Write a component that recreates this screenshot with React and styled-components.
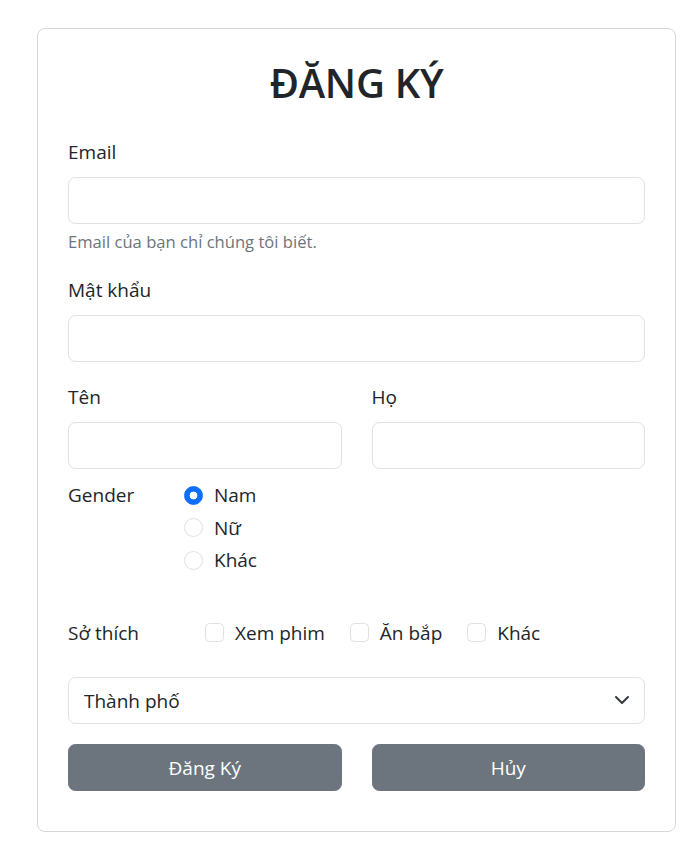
import styled, { createGlobalStyle } from 'styled-components';

//region [[ Styles ]]
const GlobalStyle = createGlobalStyle`
    * { box-sizing: border-box; }
    body {
        margin: 0;
        background: #ffffff;
        color: #212529;
        font-family: "Segoe UI", "Open Sans", "Noto Sans", sans-serif;
        font-size: 19px;
        line-height: 30px;
    }
`;

const Card = styled.form`
    margin: 28px 0 0 37px;
    width: 639px;
    padding: 30px 30px 40px;
    border: 1px solid #d6d6d6;
    border-radius: 8px;
`;

const Title = styled.h2`
    margin: 0 0 30px;
    font-size: 40px;
    line-height: 48px;
    font-weight: 600;
    text-align: center;
    letter-spacing: -0.3px;
`;

const Group = styled.div`
    margin-bottom: ${(p) => p.$mb ?? 20}px;
`;

const Label = styled.label`
    display: block;
    margin-bottom: 10px;
`;

const Input = styled.input`
    display: block;
    width: 100%;
    height: 47px;
    padding: 0 15px;
    font: inherit;
    color: #212529;
    border: 1px solid #dee2e6;
    border-radius: 7.5px;
    outline: none;
    background: #fff;
`;

const Help = styled.div`
    margin-top: 5px;
    font-size: 16.6px;
    line-height: 26px;
    color: #6c757d;
`;

const TwoCols = styled.div`
    display: grid;
    grid-template-columns: 1fr 1fr;
    gap: 30px;
    margin-bottom: ${(p) => p.$mb ?? 0}px;
`;

const OptionRow = styled.div`
    display: grid;
    grid-template-columns: ${(p) => p.$labelWidth}px 1fr;
    margin-bottom: ${(p) => p.$mb ?? 0}px;
`;

const OptionStack = styled.div`
    display: flex;
    flex-direction: ${(p) => (p.$inline ? 'row' : 'column')};
`;

const Check = styled.label`
    display: flex;
    align-items: center;
    gap: 11px;
    min-height: 30px;
    margin-bottom: 2.5px;
    margin-right: ${(p) => (p.$inline ? 25 : 0)}px;
`;

const Radio = styled.input.attrs({ type: 'radio' })`
    appearance: none;
    margin: 0;
    width: 19px;
    height: 19px;
    flex: none;
    border: 1px solid #dee2e6;
    border-radius: 50%;
    background: #fff;

    &:checked {
        border-color: #0d6efd;
        background: radial-gradient(circle, #fff 0 3.6px, #0d6efd 4.2px);
    }
`;

const Box = styled.input.attrs({ type: 'checkbox' })`
    appearance: none;
    margin: 0;
    width: 19px;
    height: 19px;
    flex: none;
    border: 1px solid #dee2e6;
    border-radius: 4.5px;
    background: #fff;
`;

const SelectWrap = styled.div`
    position: relative;
    margin-bottom: 20px;
`;

const Select = styled.select`
    display: block;
    width: 100%;
    height: 47px;
    padding: 0 45px 0 15px;
    font: inherit;
    color: #212529;
    border: 1px solid #dee2e6;
    border-radius: 7.5px;
    background: #fff;
    appearance: none;
    outline: none;
`;

const Chevron = styled.svg`
    position: absolute;
    right: 15px;
    top: 17px;
    pointer-events: none;
`;

const Button = styled.button`
    height: 47px;
    font: inherit;
    color: #ffffff;
    background: #6c757d;
    border: 1px solid #6c757d;
    border-radius: 7.5px;
`;
//endregion [[ Styles ]]

const genders = ['Nam', 'Nữ', 'Khác'];
const hobbies = ['Xem phim', 'Ăn bắp', 'Khác'];

function App() {
    return (
        <>
            <GlobalStyle />
            <Card onSubmit={(e) => e.preventDefault()}>
                <Title>ĐĂNG KÝ</Title>

                <Group>
                    <Label>Email</Label>
                    <Input type="email" />
                    <Help>Email của bạn chỉ chúng tôi biết.</Help>
                </Group>

                <Group>
                    <Label>Mật khẩu</Label>
                    <Input type="password" />
                </Group>

                <TwoCols $mb={11}>
                    <div>
                        <Label>Tên</Label>
                        <Input type="text" />
                    </div>
                    <div>
                        <Label>Họ</Label>
                        <Input type="text" />
                    </div>
                </TwoCols>

                <OptionRow $labelWidth={116} $mb={40}>
                    <span>Gender</span>
                    <OptionStack>
                        {genders.map((g, i) => (
                            <Check key={g}>
                                <Radio name="gender" defaultChecked={i === 0} />
                                {g}
                            </Check>
                        ))}
                    </OptionStack>
                </OptionRow>

                <OptionRow $labelWidth={137} $mb={27}>
                    <span>Sở thích</span>
                    <OptionStack $inline>
                        {hobbies.map((h) => (
                            <Check key={h} $inline>
                                <Box />
                                {h}
                            </Check>
                        ))}
                    </OptionStack>
                </OptionRow>

                <SelectWrap>
                    <Select defaultValue="">
                        <option value="">Thành phố</option>
                        <option>Hà Nội</option>
                        <option>Hồ Chí Minh</option>
                    </Select>
                    <Chevron width="16" height="12" viewBox="0 2 16 12">
                        <path d="m2 5 6 6 6-6" fill="none" stroke="#343a40" strokeWidth="2" strokeLinecap="round" strokeLinejoin="round" />
                    </Chevron>
                </SelectWrap>

                <TwoCols>
                    <Button type="submit">Đăng Ký</Button>
                    <Button type="button">Hủy</Button>
                </TwoCols>
            </Card>
        </>
    );
}

export default App;
